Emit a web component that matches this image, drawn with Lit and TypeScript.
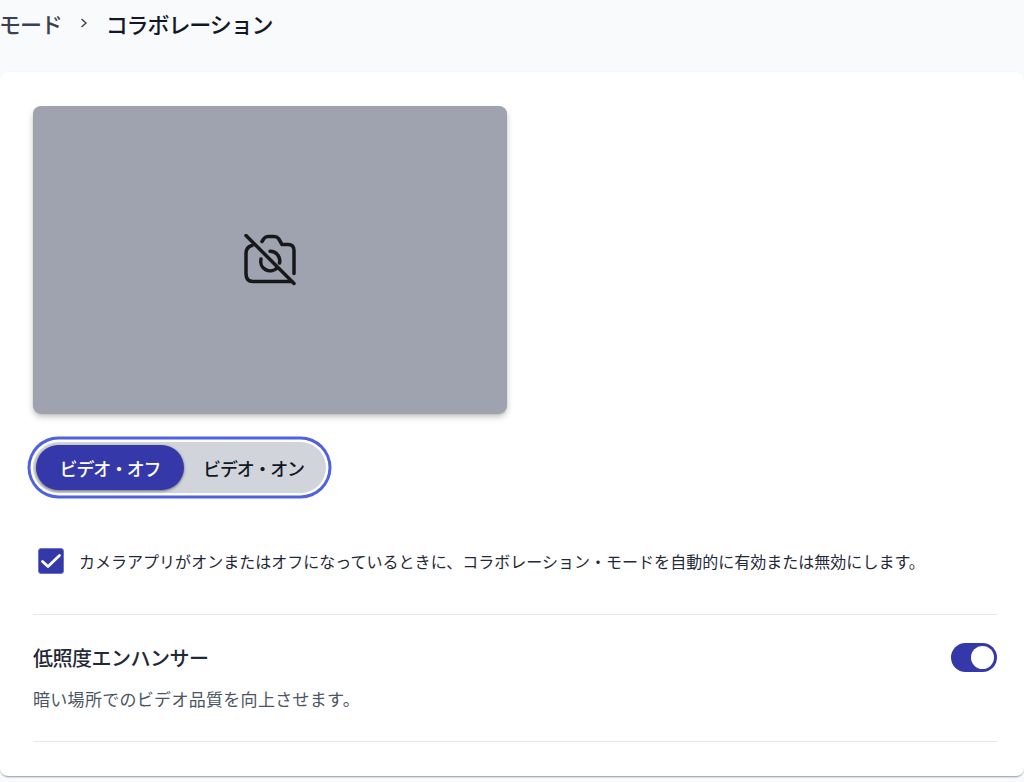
import { LitElement, html, css } from "lit";
import { customElement } from "lit/decorators.js";

@customElement("app-root")
export class AppRoot extends LitElement {
  static styles = css`
    :host {
      display: block;
      width: 1024px;
      height: 782px;
      overflow: hidden;
      background: #f9fafb;
      font-family: "Noto Sans CJK JP", "Noto Sans", sans-serif;
      color: #111827;
    }
    .crumbs {
      display: flex;
      align-items: center;
      height: 46px;
      font-size: 22px;
      font-weight: 500;
      letter-spacing: -1.1px;
      line-height: 46px;
      margin-bottom: 26px;
    }
    .prev { color: #374151; margin-left: -1px; }
    .sep { margin: 0 17px 0 17px; display: flex; }
    .card {
      background: #fff;
      height: 704px;
      box-sizing: border-box;
      border-radius: 8px;
      box-shadow: 0 2px 2px -1px rgba(0, 0, 0, 0.4), 0 0 2px rgba(0, 0, 0, 0.05);
      padding: 34px 27px 0 33px;
    }
    .video {
      width: 474px;
      height: 307px;
      border-radius: 8px;
      background: #9ea3af;
      display: flex;
      align-items: center;
      justify-content: center;
      box-shadow: 0 1px 1px rgba(0, 0, 0, 0.2), 0 4px 7px -1px rgba(0, 0, 0, 0.3);
    }
    .seg {
      display: inline-flex;
      margin-top: 29px;
      padding: 3px;
      background: #d1d5db;
      border-radius: 999px;
      box-shadow: 0 0 0 2.5px #fff, 0 0 0 5.5px #4f62e0;
      box-sizing: border-box;
      height: 51px;
      vertical-align: top;
    }
    .seg-btn {
      width: 148px;
      height: 45px;
      border-radius: 999px;
      display: flex;
      align-items: center;
      justify-content: center;
      font-size: 18px;
      font-weight: 500;
      letter-spacing: -1.2px;
      color: #111827;
    }
    .seg-btn.on {
      background: #3538a8;
      color: #fff;
      box-shadow: 0 1px 3px rgba(0, 0, 0, 0.5);
    }
    .seg-btn.off { width: 139px; }
    .check-row {
      display: flex;
      align-items: center;
      gap: 15px;
      margin: 54px 0 0 5px;
      height: 28px;
      font-size: 16px;
      letter-spacing: 0.02px;
      color: #1f2937;
    }
    .box {
      width: 26px;
      height: 26px;
      border-radius: 3px;
      background: #3538a8;
      border: 1px solid #6b74c9;
      box-sizing: border-box;
      display: flex;
      align-items: center;
      justify-content: center;
      flex: none;
    }
    .rule { height: 1px; background: #e5e7eb; }
    .rule.a { margin-top: 39px; }
    .enh {
      display: flex;
      justify-content: space-between;
      height: 126px;
      box-sizing: border-box;
      padding-top: 27px;
    }
    .enh h3 {
      margin: 0;
      font-size: 20px;
      font-weight: 500;
      line-height: 32px;
      letter-spacing: -0.5px;
      color: #1f2937;
    }
    .enh p {
      margin: 13px 0 0;
      font-size: 17px;
      line-height: 24px;
      letter-spacing: 0.3px;
      color: #4b5563;
    }
    .switch {
      width: 46px;
      height: 29px;
      margin-top: 1px;
      border-radius: 999px;
      background: #3538a8;
      display: flex;
      align-items: center;
      justify-content: flex-end;
      padding-right: 3px;
      box-sizing: border-box;
    }
    .knob { width: 23px; height: 23px; border-radius: 50%; background: #fff; }
  `;

  render() {
    return html`
      <div class="crumbs">
        <span class="prev">モード</span>
        <span class="sep">
          <svg width="10" height="12" viewBox="0 0 10 12" fill="none" stroke="#374151" stroke-width="1.4">
            <path d="M2.5 2 L7 6 L2.5 10" />
          </svg>
        </span>
        <span>コラボレーション</span>
      </div>
      <div class="card">
        <div class="video">
          <svg width="52" height="52" viewBox="0 0 52 52" fill="none" stroke="#18181b" stroke-width="3.500" stroke-linecap="round" stroke-linejoin="round">
            <path d="M18 7.500 L20 4.500 Q21.500 2.500 24 2.500 H30 Q33 2.500 34.500 4.500 L38 10.500 H44 Q50 10.500 50 16.500 V39.500" />
            <path d="M8 11.500 Q2 13 2 19.500 V39.500 Q2 47.500 9 47.500 H48" />
            <path d="M26 17.300 A9.500 9.500 0 0 1 35.500 29" />
            <path d="M17 25 A9.500 9.500 0 0 0 33 34" />
            <path d="M2 1.500 L50 49.500" />
          </svg>
        </div>
        <div class="seg">
          <div class="seg-btn on">ビデオ・オフ</div>
          <div class="seg-btn off">ビデオ・オン</div>
        </div>
        <div class="check-row">
          <span class="box">
            <svg width="22" height="18" viewBox="0 0 22 18" fill="none" stroke="#fff" stroke-width="2.800" stroke-linecap="round" stroke-linejoin="round">
              <path d="M2.500 9.500 L8 14.500 L19.500 3.500" />
            </svg>
          </span>
          <span>カメラアプリがオンまたはオフになっているときに、コラボレーション・モードを自動的に有効または無効にします。</span>
        </div>
        <div class="rule a"></div>
        <div class="enh">
          <div>
            <h3>低照度エンハンサー</h3>
            <p>暗い場所でのビデオ品質を向上させます。</p>
          </div>
          <div class="switch"><div class="knob"></div></div>
        </div>
        <div class="rule"></div>
      </div>
    `;
  }
}
